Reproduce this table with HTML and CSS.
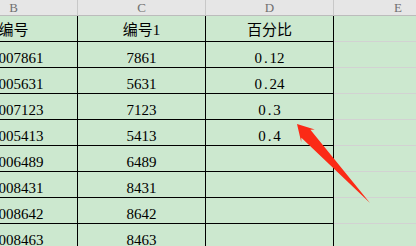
FILE: index.html
```html
<!DOCTYPE html>
<html lang="zh-CN">
<head>
<meta charset="utf-8">
<title>Sheet</title>
<link rel="stylesheet" href="styles.css">
</head>
<body>
<div class="sheet">
  <div class="grid">
    <div class="hd">B</div><div class="hd">C</div><div class="hd">D</div><div class="hd last">E</div>

    <div class="c title">编号</div><div class="c title">编号1</div><div class="c title">百分比</div><div class="e"></div>
    <div class="c">10007861</div><div class="c">7861</div><div class="c">0<span class="dot">.</span>12</div><div class="e"></div>
    <div class="c">10005631</div><div class="c">5631</div><div class="c">0<span class="dot">.</span>24</div><div class="e"></div>
    <div class="c">10007123</div><div class="c">7123</div><div class="c">0<span class="dot">.</span>3</div><div class="e"></div>
    <div class="c">10005413</div><div class="c">5413</div><div class="c">0<span class="dot">.</span>4</div><div class="e"></div>
    <div class="c">10006489</div><div class="c">6489</div><div class="c"></div><div class="e"></div>
    <div class="c">10008431</div><div class="c">8431</div><div class="c"></div><div class="e"></div>
    <div class="c">10008642</div><div class="c">8642</div><div class="c"></div><div class="e"></div>
    <div class="c">10008463</div><div class="c">8463</div><div class="c"></div><div class="e"></div>
  </div>
  <svg class="arrow" width="416" height="246" viewBox="0 0 416 246" xmlns="http://www.w3.org/2000/svg">
    <polygon fill="#fb2a16" points="297,124 314.8,129.4 310.4,129.8 370,203 301.4,137.8 301.2,142"/>
  </svg>
</div>
</body>
</html>
```
FILE: styles.css
```css
html, body {
  margin: 0;
  padding: 0;
  background: #cce8cf;
  overflow: hidden;
}
.sheet {
  position: relative;
  width: 416px;
  height: 246px;
  overflow: hidden;
}
.grid {
  display: grid;
  grid-template-columns: 128px 128px 128px 128px;
  grid-auto-rows: 26px;
  grid-template-rows: 16px;
  margin-left: -50px;
  width: 512px;
  font-family: "Liberation Serif", "Noto Sans CJK SC", serif;
  font-size: 15px;
  color: #000;
}
.hd {
  box-sizing: border-box;
  background: #e6e6e6;
  border-bottom: 1px solid #bcbcbc;
  border-right: 1px solid #c8c8c8;
  color: #707070;
  font-size: 13px;
  line-height: 15px;
  text-align: center;
}
.hd.last {
  border-right: none;
}
.c {
  box-sizing: border-box;
  border-right: 1px solid #000;
  border-bottom: 1px solid #000;
  display: flex;
  align-items: flex-end;
  justify-content: center;
  line-height: 18px;
  white-space: nowrap;
  overflow: hidden;
}
.c.title {
  padding-bottom: 2px;
}
.e {
  box-sizing: border-box;
  border-bottom: 1px solid #d2d2d2;
}
.dot {
  display: inline-block;
  width: 0.5em;
  text-align: center;
}
.arrow {
  position: absolute;
  left: 0;
  top: 0;
}
```
